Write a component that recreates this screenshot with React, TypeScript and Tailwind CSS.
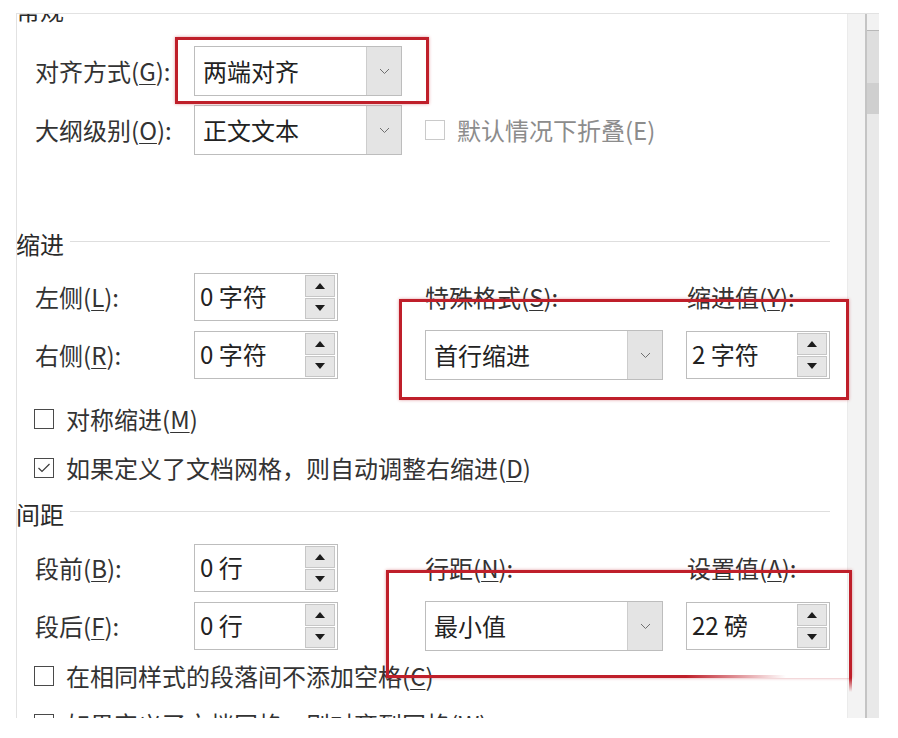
import React from 'react';

const Key: React.FC<{ k: string }> = ({ k }) => (
    <span className="underline underline-offset-[3px] decoration-1">{k}</span>
);

const Label: React.FC<{ text: string; k: string; colon?: boolean }> = ({ text, k, colon = true }) => (
    <span className="whitespace-nowrap">
        {text}(<Key k={k} />){colon ? ':' : ''}
    </span>
);

const Chevron = () => (
    <svg width="11" height="7" viewBox="0 0 11 7">
        <path d="M1 1l4.5 4.5L10 1" stroke="#6f6f6f" fill="none" strokeWidth="1" />
    </svg>
);

const Tri: React.FC<{ down?: boolean }> = ({ down }) => (
    <svg width="10" height="6" viewBox="0 0 10 6">
        <path d={down ? 'M0 0h10L5 6z' : 'M5 0l5 6H0z'} fill="#1c1c1c" />
    </svg>
);

const Dropdown: React.FC<{ value: string; className: string }> = ({ value, className }) => (
    <div className={`flex border border-[#bdbdbd] bg-white ${className}`}>
        <div className="flex-grow flex items-center pl-[8px] text-[#222]">{value}</div>
        <div className="w-[35px] flex items-center justify-center bg-[#e4e4e4] border-l border-[#cdcdcd]">
            <Chevron />
        </div>
    </div>
);

const SpinBox: React.FC<{ value: string }> = ({ value }) => (
    <div className="flex w-[144px] h-[48px] border border-[#bdbdbd] bg-white">
        <div className="flex-grow flex items-center pl-[5px] pb-[3px] text-[#222]">{value}</div>
        <div className="w-[30px] mr-[2px] my-[1px] flex flex-col gap-px">
            <div className="flex-1 flex items-center justify-center bg-[#e6e6e6] border border-[#c6c6c6]">
                <Tri />
            </div>
            <div className="flex-1 flex items-center justify-center bg-[#e6e6e6] border border-[#c6c6c6]">
                <Tri down />
            </div>
        </div>
    </div>
);

const Checkbox: React.FC<{ checked?: boolean; disabled?: boolean }> = ({ checked, disabled }) => (
    <div className={`w-[20px] h-[20px] border bg-white flex-shrink-0 ${disabled ? 'border-[#cacaca]' : 'border-[#4a4a4a]'}`}>
        {checked && (
            <svg width="18" height="18" viewBox="0 0 18 18">
                <path d="M3.5 9l3.5 3.5 7.5-7.5" stroke="#3a3a3a" fill="none" strokeWidth="1.2" />
            </svg>
        )}
    </div>
);

const SectionHeader: React.FC<{ title: string; className: string }> = ({ title, className }) => (
    <div className={`flex items-center h-[32px] -ml-px ${className}`}>
        <span className="leading-[32px] text-[#2a2a2a]">{title}</span>
        <div className="ml-[6px] w-[760px] h-px bg-[#dedede] -translate-y-[3px]" />
    </div>
);

const CheckRow: React.FC<{ checked?: boolean; className: string; children: React.ReactNode }> = ({ checked, className, children }) => (
    <div className={`flex items-center h-[32px] pl-[17px] gap-[12px] ${className}`}>
        <Checkbox checked={checked} />
        <span className="whitespace-nowrap">{children}</span>
    </div>
);

const ScrollBar = () => (
    <div className="w-[32px] h-full flex flex-shrink-0">
        <div className="w-[18px] bg-[#f3f3f3] border-l border-[#ebebeb]" />
        <div className="w-[2px] bg-[#c4c4c4]" />
        <div className="w-[12px] bg-[#e9e9e9] flex flex-col">
            <div className="h-[16px] bg-[#f2f2f2]" />
            <div className="h-px bg-[#b8b8b8]" />
            <div className="h-[52px] bg-[#dedede]" />
            <div className="h-[31px] bg-[#cfcfcf]" />
        </div>
    </div>
);

const RED = 'border-[#bf1f2a] shadow-[0_0_3px_rgba(191,31,42,0.45)]';

export default function App() {
    return (
        <div className="relative w-[898px] h-[738px] bg-white overflow-hidden text-[24px] text-[#333] font-['Noto_Sans_CJK_SC',sans-serif]">
            <div className="ml-[16px] mt-[13px] w-[863px] h-[705px] flex border-l border-t border-[#e2e2e2]">
                <div className="w-[830px] h-full overflow-hidden flex flex-col">
                    <div className="h-[32px] -mt-[20px] -ml-px leading-[32px] text-[#2a2a2a]">常规</div>

                    <div className="flex items-center h-[50px] mt-[20px] pl-[18px]">
                        <div className="w-[159px]"><Label text="对齐方式" k="G" /></div>
                        <Dropdown value="两端对齐" className="w-[208px] h-[50px]" />
                    </div>
                    <div className="flex items-center h-[50px] mt-[9px] pl-[18px]">
                        <div className="w-[159px]"><Label text="大纲级别" k="O" /></div>
                        <Dropdown value="正文文本" className="w-[208px] h-[50px]" />
                        <div className="ml-[23px] flex items-center gap-[12px] text-[#8c8c8c]">
                            <Checkbox disabled />
                            <span className="whitespace-nowrap">默认情况下折叠(E)</span>
                        </div>
                    </div>

                    <SectionHeader title="缩进" className="mt-[73px]" />

                    <div className="flex items-center h-[48px] mt-[13px] pl-[18px]">
                        <div className="w-[159px]"><Label text="左侧" k="L" /></div>
                        <SpinBox value="0 字符" />
                        <div className="ml-[87px] w-[238px]"><Label text="特殊格式" k="S" /></div>
                        <div className="ml-[24px]"><Label text="缩进值" k="Y" /></div>
                    </div>
                    <div className="flex items-center h-[50px] mt-[9px] pl-[18px]">
                        <div className="w-[159px]"><Label text="右侧" k="R" /></div>
                        <SpinBox value="0 字符" />
                        <Dropdown value="首行缩进" className="ml-[87px] w-[238px] h-[50px]" />
                        <div className="ml-[23px]"><SpinBox value="2 字符" /></div>
                    </div>

                    <CheckRow className="mt-[23px]"><Label text="对称缩进" k="M" colon={false} /></CheckRow>
                    <CheckRow checked className="mt-[17px]">
                        如果定义了文档网格，则自动调整右缩进(<Key k="D" />)
                    </CheckRow>

                    <SectionHeader title="间距" className="mt-[14px]" />

                    <div className="flex items-center h-[49px] mt-[14px] pl-[18px]">
                        <div className="w-[159px]"><Label text="段前" k="B" /></div>
                        <SpinBox value="0 行" />
                        <div className="ml-[87px] w-[238px]"><Label text="行距" k="N" /></div>
                        <div className="ml-[24px]"><Label text="设置值" k="A" /></div>
                    </div>
                    <div className="flex items-center h-[50px] mt-[9px] pl-[18px]">
                        <div className="w-[159px]"><Label text="段后" k="F" /></div>
                        <SpinBox value="0 行" />
                        <Dropdown value="最小值" className="ml-[87px] w-[238px] h-[50px]" />
                        <div className="ml-[23px]"><SpinBox value="22 磅" /></div>
                    </div>

                    <CheckRow className="mt-[9px]">在相同样式的段落间不添加空格(<Key k="C" />)</CheckRow>
                    <CheckRow className="mt-[16px]">如果定义了文档网格，则对齐到网格(<Key k="W" />)</CheckRow>
                </div>
                <ScrollBar />
            </div>

            {/* red annotation boxes */}
            <div className={`absolute left-[175px] top-[37px] w-[254px] h-[67px] border-[3px] ${RED}`} />
            <div className={`absolute left-[399px] top-[299px] w-[450px] h-[101px] border-[3px] ${RED}`} />
            <div className={`absolute left-[386px] top-[570px] w-[466px] h-[108px] border-l-[3px] border-t-[3px] border-r-[3px] ${RED}`} />
            <div className="absolute left-[386px] top-[675px] w-[400px] h-[3px] bg-linear-to-r from-[#bf1f2a] via-[#bf1f2a] via-75% to-transparent" />
            <div className="absolute left-[849px] top-[678px] w-[3px] h-[14px] bg-linear-to-b from-[#bf1f2a] to-transparent" />
        </div>
    );
}
